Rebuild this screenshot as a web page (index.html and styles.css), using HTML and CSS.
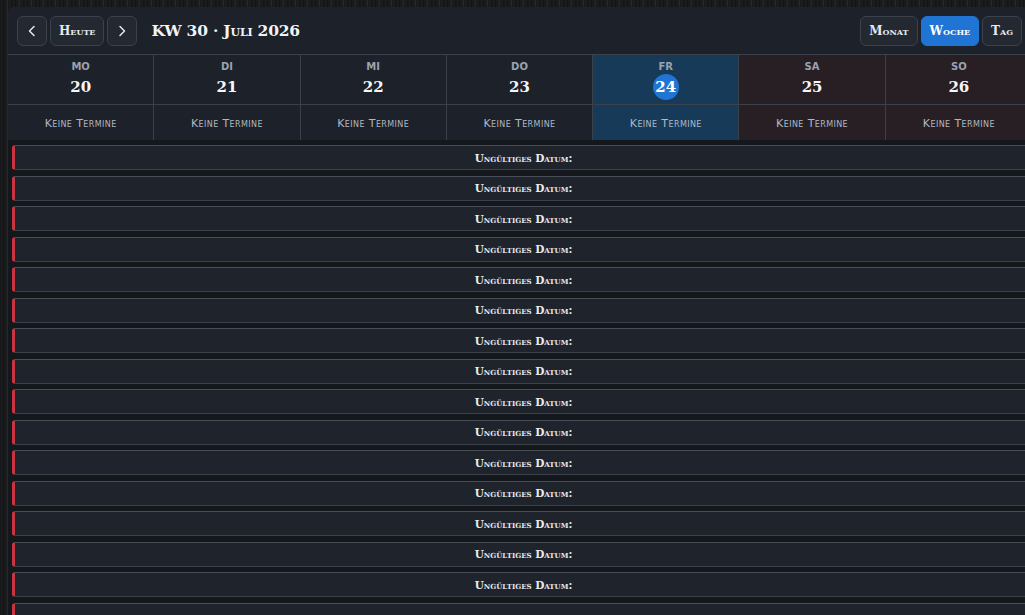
FILE: index.html
```html
<!DOCTYPE html>
<html lang="de">
<head>
<meta charset="utf-8">
<title>Kalender</title>
<link rel="stylesheet" href="styles.css">
</head>
<body>
<div class="app">
  <header class="toolbar">
    <div class="nav">
      <button class="btn icon" aria-label="Zurück"><svg width="12" height="12" viewBox="0 0 12 12"><path d="M8 1.5 3.5 6 8 10.5" fill="none" stroke="#e6e9ee" stroke-width="1.5" stroke-linecap="round" stroke-linejoin="round"/></svg></button>
      <button class="btn text">Heute</button>
      <button class="btn icon" aria-label="Weiter"><svg width="12" height="12" viewBox="0 0 12 12"><path d="M4 1.5 8.5 6 4 10.5" fill="none" stroke="#e6e9ee" stroke-width="1.5" stroke-linecap="round" stroke-linejoin="round"/></svg></button>
      <h1 class="title">KW 30 · Juli 2026</h1>
    </div>
    <div class="views">
      <button class="btn text">Monat</button>
      <button class="btn text active">Woche</button>
      <button class="btn text">Tag</button>
    </div>
  </header>
  <div class="week">
    <div class="day"><div class="dhead"><span class="dname">MO</span><span class="dnum">20</span></div><div class="dbody">Keine Termine</div></div>
    <div class="day"><div class="dhead"><span class="dname">DI</span><span class="dnum">21</span></div><div class="dbody">Keine Termine</div></div>
    <div class="day"><div class="dhead"><span class="dname">MI</span><span class="dnum">22</span></div><div class="dbody">Keine Termine</div></div>
    <div class="day"><div class="dhead"><span class="dname">DO</span><span class="dnum">23</span></div><div class="dbody">Keine Termine</div></div>
    <div class="day today"><div class="dhead"><span class="dname">FR</span><span class="dnum">24</span></div><div class="dbody">Keine Termine</div></div>
    <div class="day weekend"><div class="dhead"><span class="dname">SA</span><span class="dnum">25</span></div><div class="dbody">Keine Termine</div></div>
    <div class="day weekend"><div class="dhead"><span class="dname">SO</span><span class="dnum">26</span></div><div class="dbody">Keine Termine</div></div>
  </div>
  <div class="list">
    <div class="item">Ungültiges Datum:</div>
    <div class="item">Ungültiges Datum:</div>
    <div class="item">Ungültiges Datum:</div>
    <div class="item">Ungültiges Datum:</div>
    <div class="item">Ungültiges Datum:</div>
    <div class="item">Ungültiges Datum:</div>
    <div class="item">Ungültiges Datum:</div>
    <div class="item">Ungültiges Datum:</div>
    <div class="item">Ungültiges Datum:</div>
    <div class="item">Ungültiges Datum:</div>
    <div class="item">Ungültiges Datum:</div>
    <div class="item">Ungültiges Datum:</div>
    <div class="item">Ungültiges Datum:</div>
    <div class="item">Ungültiges Datum:</div>
    <div class="item">Ungültiges Datum:</div>
    <div class="item"></div>
  </div>
</div>
</body>
</html>
```

FILE: styles.css
```css
html, body {
  margin: 0;
  padding: 0;
  height: 100%;
  overflow: hidden;
}
body {
  background-color: #15171a;
  background-image: repeating-linear-gradient(90deg,
    #1b1d20 0px, #101113 1px, #26282b 2px, #0e0f11 3px, #1d1f22 5px,
    #111214 6px, #2a2c2f 7px, #131416 9px, #202225 10px, #0f1012 12px);
  padding: 7px 0 0 8px;
  font-family: "DejaVu Sans", sans-serif;
  color: #e6e9ee;
}
.app {
  width: 1024px;
  background: #14171b;
  border-top-left-radius: 6px;
}
.toolbar {
  display: flex;
  justify-content: space-between;
  align-items: center;
  height: 48px;
  padding: 0 10px 0 9px;
  background: #1d2129;
  border-bottom: 1px solid #3a414b;
  border-top-left-radius: 6px;
  box-sizing: border-box;
}
.nav, .views {
  display: flex;
  align-items: center;
  gap: 3px;
}
.btn {
  height: 30px;
  border: 1px solid #3b424c;
  background: #232831;
  color: #e6e9ee;
  border-radius: 6px;
  font-family: "DejaVu Serif", serif;
  font-weight: bold;
  font-variant: small-caps;
  font-size: 12px;
  padding: 0 8px;
  display: flex;
  align-items: center;
  justify-content: center;
  cursor: pointer;
}
.btn.icon {
  width: 30px;
  padding: 0;
}
.btn.active {
  background: #1f74d4;
  border-color: #1f74d4;
  color: #fff;
}
.title {
  margin: 0 0 0 11px;
  font-family: "DejaVu Serif", serif;
  font-variant: small-caps;
  font-weight: bold;
  font-size: 15.5px;
  letter-spacing: -0.2px;
  color: #f1f3f6;
}
.week {
  display: grid;
  grid-template-columns: repeat(7, 1fr);
  background: #1d2129;
  border-bottom: 5px solid #14171b;
}
.day {
  border-right: 1px solid #3a414b;
  display: flex;
  flex-direction: column;
}
.day:last-child { border-right: none; }
.dhead {
  height: 50px;
  display: flex;
  flex-direction: column;
  align-items: center;
  border-bottom: 1px solid #3a414b;
  box-sizing: border-box;
}
.dname {
  margin-top: 6px;
  font-family: "DejaVu Sans", sans-serif;
  font-weight: bold;
  font-size: 10px;
  color: #9aa3b0;
  line-height: 12px;
}
.dnum {
  margin-top: 1px;
  font-family: "DejaVu Serif", serif;
  font-weight: bold;
  font-size: 15px;
  line-height: 26px;
  color: #f4f6f8;
}
.today .dnum {
  width: 26px;
  height: 26px;
  border-radius: 50%;
  background: #1f74d4;
  text-align: center;
  color: #fff;
}
.dbody {
  height: 35px;
  padding-top: 2px;
  box-sizing: border-box;
  display: flex;
  align-items: center;
  justify-content: center;
  font-family: "DejaVu Sans", sans-serif;
  font-variant: small-caps;
  font-size: 11px;
  letter-spacing: 0.4px;
  color: #b0b8c3;
}
.today { background: #173a58; }
.weekend { background: #281f25; }
.list {
  display: flex;
  flex-direction: column;
  gap: 5.5px;
  padding-left: 4px;
  background: #14171b;
}
.item {
  height: 25px;
  box-sizing: border-box;
  background: #1f242c;
  border-top: 1px solid #474e58;
  border-bottom: 1px solid #3a414a;
  border-left: 3px solid #c8343f;
  border-radius: 3px 0 0 3px;
  display: flex;
  align-items: center;
  justify-content: center;
  font-family: "DejaVu Serif", serif;
  font-variant: small-caps;
  font-weight: bold;
  font-size: 10.5px;
  color: #e8ebef;
}
```
